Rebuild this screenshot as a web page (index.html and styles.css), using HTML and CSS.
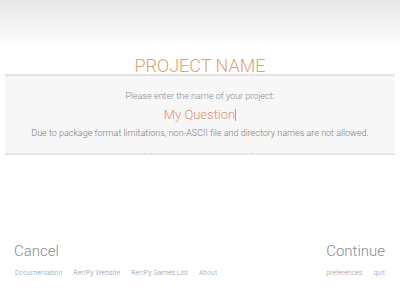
FILE: index.html
```html
<!DOCTYPE html>
<html lang="en">
<head>
  <meta charset="UTF-8">
  <title>Ren'Py Launcher</title>
  <link rel="stylesheet" href="styles.css">
</head>
<body>
  <div class="screen">
    <h1 class="title">PROJECT NAME</h1>
    <div class="panel">
      <p class="prompt">Please enter the name of your project:</p>
      <p class="input">My Question<span class="caret"></span></p>
      <p class="note">Due to package format limitations, non-ASCII file and directory names are not allowed.</p>
    </div>
    <div class="spacer"></div>
    <div class="actions">
      <a class="action">Cancel</a>
      <a class="action">Continue</a>
    </div>
    <div class="links">
      <div class="links-group">
        <a>Documentation</a>
        <a>Ren'Py Website</a>
        <a>Ren'Py Games List</a>
        <a>About</a>
      </div>
      <div class="links-group">
        <a>preferences</a>
        <a>quit</a>
      </div>
    </div>
  </div>
</body>
</html>
```
FILE: styles.css
```css
* { margin: 0; padding: 0; box-sizing: border-box; }

html,
body { width: 100%; height: 100%; }

body {
  font-family: Roboto, 'Liberation Sans', sans-serif;
  font-weight: 300;
  background: linear-gradient(to bottom, #e6e6e6 0, #ffffff 48px) no-repeat #fff;
}

.screen {
  height: 100%;
  display: flex;
  flex-direction: column;
  padding: 57px 5px 0;
}

.title {
  font-size: 18px;
  font-weight: 300;
  color: #dba46e;
  text-align: center;
  line-height: 17px;
}

.panel {
  background: #f7f7f7;
  padding: 14px 0 14px;
  text-align: center;
  border-top: 2px solid transparent;
  border-bottom: 2px solid transparent;
  border-image: repeating-linear-gradient(90deg, #d9d9d9 0 1px, #efefef 1px 2px) 2;
}

.prompt {
  font-size: 9px;
  color: #8a8a8a;
  line-height: 12px;
}

.input {
  font-size: 13px;
  color: #e28f78;
  line-height: 16px;
  margin-top: 5px;
}

.caret {
  display: inline-block;
  width: 1px;
  height: 12px;
  background: #e28f78;
  vertical-align: -2px;
}

.note {
  font-size: 9px;
  color: #7a7a7a;
  line-height: 12px;
  margin-top: 4px;
}

.spacer { flex: 1; }

.actions {
  display: flex;
  justify-content: space-between;
  padding: 0 10px 0 9px;
}

.action {
  font-size: 15px;
  color: #848d95;
  line-height: 20px;
}

.links {
  display: flex;
  justify-content: space-between;
  padding: 7px 10px 22px;
}

.links-group {
  display: flex;
  gap: 11px;
}

.links a {
  font-size: 7px;
  color: #8f969c;
  line-height: 10px;
}
```
